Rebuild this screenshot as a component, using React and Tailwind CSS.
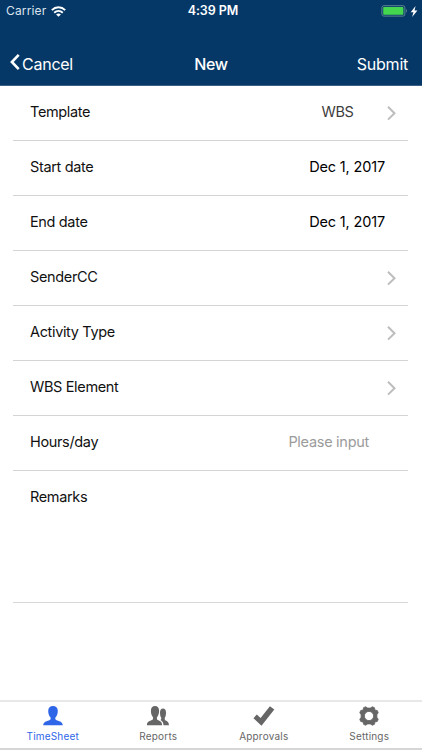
const fields = [
    { label: 'Template', value: 'WBS', valueClass: 'mr-[33.5px] tracking-[-0.4px] text-[#3c3c3c]', chevron: true },
    { label: 'Start date', value: 'Dec 1, 2017', valueClass: 'mr-[11px] tracking-[-0.16px] text-black' },
    { label: 'End date', value: 'Dec 1, 2017', valueClass: 'mr-[11px] tracking-[-0.16px] text-black' },
    { label: 'SenderCC', chevron: true },
    { label: 'Activity Type', chevron: true },
    { label: 'WBS Element', chevron: true },
    { label: 'Hours/day', value: 'Please input', valueClass: 'mr-[27px] tracking-[-0.28px] text-[#9b9b9b]' },
];

function UserIcon() {
    return (
        <svg className="h-5 w-5" viewBox="0 0 20 20" fill="currentColor">
            <path d="M10 0.1C7.2 0.1 5.2 1.8 5.2 4.9C5.2 7.9 6.2 9.8 7.4 11.2C7.9 12 7.9 13.2 6.8 14C4.4 15.1 0.4 15.4 0.2 19.2H19.8C19.6 15.4 15.6 15.1 13.2 14C12.1 13.2 12.1 12 12.6 11.2C13.8 9.8 14.8 7.9 14.8 4.9C14.8 1.8 12.8 0.1 10 0.1Z" />
        </svg>
    );
}

function UsersIcon() {
    return (
        <svg className="h-5 w-6" viewBox="0 0 24 20" fill="currentColor">
            <path d="M9 0.1C6.5 0.1 4.9 1.8 4.9 4.8C4.9 7.7 5.7 9.6 6.8 11C7.3 12 7.2 13.3 6.1 14C4 15 1.1 15.2 0.9 19.2H16.1C15.9 15.2 13.6 15 11.7 14C10.7 13.3 10.7 12 11.2 11C12.3 9.6 13.1 7.7 13.1 4.8C13.1 1.8 11.5 0.1 9 0.1Z" />
            <path d="M17 2.6C15.2 2.6 14 4 14 6.4C14 8.6 14.4 10.4 15.1 11.5C15.5 12.4 15.3 13.3 14.5 13.9C16.4 15 17.4 16.6 17.5 19.2H23C22.8 15.9 21.3 15.2 19.5 14.4C18.6 13.8 18.5 12.5 18.9 11.5C19.6 10.4 20 8.6 20 6.4C20 4 18.8 2.6 17 2.6Z" />
        </svg>
    );
}

function CheckIcon() {
    return (
        <svg className="h-5 w-6" viewBox="0 0 24 20" fill="currentColor">
            <path d="M1.4 12.2L4.8 8.6L8.6 12L17.9 0.2L22.3 3.4L9.5 19.7Z" />
        </svg>
    );
}

function GearIcon() {
    return (
        <svg className="h-5 w-5" viewBox="0 0 20 20" fill="currentColor" stroke="currentColor" strokeWidth="0.8" strokeLinejoin="round">
            <path
                fillRule="evenodd"
                d="M6.7 0.8L8.7 2.1H11.3L13.3 0.8L15.5 1.7L15.9 4.1L18.3 4.5L19.2 6.7L17.9 8.7V11.3L19.2 13.3L18.3 15.5L15.9 15.9L15.5 18.3L13.3 19.2L11.3 17.9H8.7L6.7 19.2L4.5 18.3L4.1 15.9L1.7 15.5L0.8 13.3L2.1 11.3V8.7L0.8 6.7L1.7 4.5L4.1 4.1L4.5 1.7ZM10 5.4A4.6 4.6 0 1 0 10 14.6A4.6 4.6 0 1 0 10 5.4Z"
            />
        </svg>
    );
}

const tabs = [
    { label: 'TimeSheet', Icon: UserIcon, color: 'text-[#2f66e8]' },
    { label: 'Reports', Icon: UsersIcon, color: 'text-[#666666]' },
    { label: 'Approvals', Icon: CheckIcon, color: 'text-[#666666]' },
    { label: 'Settings', Icon: GearIcon, color: 'text-[#666666]' },
];

function StatusBar() {
    return (
        <div className="grid h-[22px] grid-cols-3 items-center px-1.5">
            <div className="flex items-center gap-[5px]">
                <span className="text-[12px] leading-[22px] tracking-[0.15px] text-[#dbe4ee]">Carrier</span>
                <svg className="h-[11px] w-[15px]" viewBox="0 0 15 11" fill="none" stroke="white" strokeWidth="1.9">
                    <path d="M0.8 4.1C4.6 0.3 10.4 0.3 14.2 4.1" />
                    <path d="M3.2 6.7C5.7 4.4 9.3 4.4 11.8 6.7" />
                    <path d="M5.1 8.5C6.5 7.3 8.5 7.3 9.9 8.5L7.5 10.8Z" fill="white" stroke="none" />
                </svg>
            </div>
            <span className="pl-1 text-center text-[12.5px] font-semibold leading-[22px] tracking-[-0.05px]">4:39 PM</span>
            <div className="-mr-0.5 flex items-center justify-end gap-0.5">
                <svg className="h-3 w-[27px]" viewBox="0 0 27 12">
                    <rect x="0.9" y="0.7" width="23" height="10.4" rx="2" fill="none" stroke="#5d8592" />
                    <rect x="2.2" y="2.1" width="20.2" height="7.7" rx="0.8" fill="#45d64f" />
                    <path d="M25.1 4.1C26.4 4.7 26.4 7 25.1 7.7Z" fill="#5d8592" />
                </svg>
                <svg className="h-[11px] w-2" viewBox="0 0 7 10" fill="white">
                    <path d="M4.9 0L0.5 5.7H3L1.8 10L6.6 4.1H4Z" />
                </svg>
            </div>
        </div>
    );
}

function FieldRow({ label, value, valueClass, chevron }) {
    return (
        <div className="flex h-[55px] border-b border-[#d4d4d4] pl-[17px] pr-3 pt-4 text-[14.5px] leading-5">
            <span className="flex-1 tracking-[-0.35px] text-[#111111]">{label}</span>
            {value && <span className={valueClass}>{value}</span>}
            {chevron && (
                <svg className="mt-[3px] h-4 w-[9px]" viewBox="0 0 9 16" fill="none" stroke="#bdbdbd" strokeWidth="2">
                    <path d="M1 1.8L7.5 8.2L1 14.6" />
                </svg>
            )}
        </div>
    );
}

function App() {
    return (
        <div className="flex h-[750px] w-[422px] flex-col overflow-hidden bg-white font-['Inter','Liberation_Sans',sans-serif]">
            <header className="flex h-[86px] flex-col border-b border-[#3c5f86] bg-[#053867] text-white">
                <StatusBar />
                <nav className="grid flex-1 grid-cols-3 items-center px-2.5 pt-5 text-[16px] leading-5 tracking-[-0.25px]">
                    <div className="flex items-center gap-0.5">
                        <svg className="-mt-1 h-4 w-2.5" viewBox="0 0 10 16" fill="none" stroke="white" strokeWidth="2.6">
                            <path d="M8.7 0.9L1.9 8L8.7 15.1" />
                        </svg>
                        <span>Cancel</span>
                    </div>
                    <span className="text-center font-medium">New</span>
                    <span className="pr-1 text-right">Submit</span>
                </nav>
            </header>

            <main className="flex-1 pl-[13px] pr-3.5">
                {fields.map((field) => (
                    <FieldRow key={field.label} {...field} />
                ))}
                <div className="h-[132px] border-b border-[#d8d8d8] pl-[17px] pt-4 text-[14.5px] leading-5 tracking-[-0.35px] text-[#111111]">
                    Remarks
                </div>
            </main>

            <footer className="grid h-[50px] grid-cols-4 border-b-2 border-t-2 border-b-[#d6d6d6] border-t-[#e8e8e8]">
                {tabs.map(({ label, Icon, color }) => (
                    <div key={label} className={`flex flex-col items-center pt-1 ${color}`}>
                        <Icon />
                        <span className="mt-1 text-[10px] leading-3 tracking-[0.2px]">{label}</span>
                    </div>
                ))}
            </footer>
        </div>
    );
}

export default App;
